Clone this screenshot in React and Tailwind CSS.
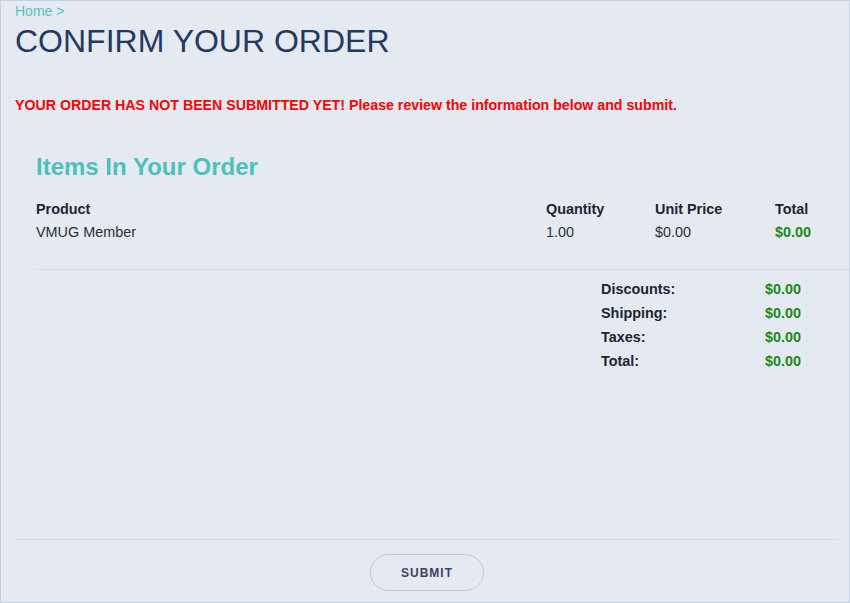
export default function App() {
  const font = { fontFamily: '"Liberation Sans", Arial, sans-serif' };
  const summary = [
    ["Discounts:", "$0.00"],
    ["Shipping:", "$0.00"],
    ["Taxes:", "$0.00"],
    ["Total:", "$0.00"],
  ];
  return (
    <div
      style={font}
      className="w-[850px] h-[603px] bg-[#e5e9f2] border border-[#c2d2e6] flex flex-col"
    >
      <div className="pl-[14px] pt-[2px] flex-1">
        <div className="text-[14px] leading-[16px] text-[#55c4c0]">Home &gt;</div>
        <h1 className="mt-[4px] text-[32px] leading-[36px] text-[#1f3a64] font-normal">
          CONFIRM YOUR ORDER
        </h1>
        <p className="mt-[38px] text-[14.2px] leading-[16px] font-bold text-[#ff0000]">
          YOUR ORDER HAS NOT BEEN SUBMITTED YET! Please review the information below and submit.
        </p>
        <div className="pl-[21px]">
          <h2 className="mt-[40px] text-[24px] leading-[28px] font-bold text-[#4cc0bb]">
            Items In Your Order
          </h2>
          <div className="mt-[16px] grid grid-cols-[510px_109px_120px_1fr] grid-rows-[23px_24px] text-[14.4px] leading-[24px]">
            <div className="font-bold text-[#1e2433]">Product</div>
            <div className="font-bold text-[#1e2433]">Quantity</div>
            <div className="font-bold text-[#1e2433]">Unit Price</div>
            <div className="font-bold text-[#1e2433]">Total</div>
            <div className="text-[#2a2e3a]">VMUG Member</div>
            <div className="text-[#2a2e3a]">1.00</div>
            <div className="text-[#2a2e3a]">$0.00</div>
            <div className="font-bold text-[#178a17]">$0.00</div>
          </div>
          <div className="mt-[25px] border-t border-[#d6dae2] pt-[7px]">
            <div className="ml-[565px] grid grid-cols-[164px_auto] text-[14.4px] leading-[24px] font-bold">
              {summary.map(([l, v]) => (
                <div key={l} className="contents">
                  <div className="text-[#1e2433]">{l}</div>
                  <div className="text-[#178a17]">{v}</div>
                </div>
              ))}
            </div>
          </div>
        </div>
      </div>
      <div className="ml-[14px] mr-[10px] border-t border-[#d6dae2] pt-[14px] pb-[11px] flex justify-center">
        <button className="w-[114px] h-[37px] rounded-full border border-[#c4c8d2] bg-transparent text-[12px] font-bold tracking-[1px] text-[#3b4262]">
          SUBMIT
        </button>
      </div>
    </div>
  );
}
